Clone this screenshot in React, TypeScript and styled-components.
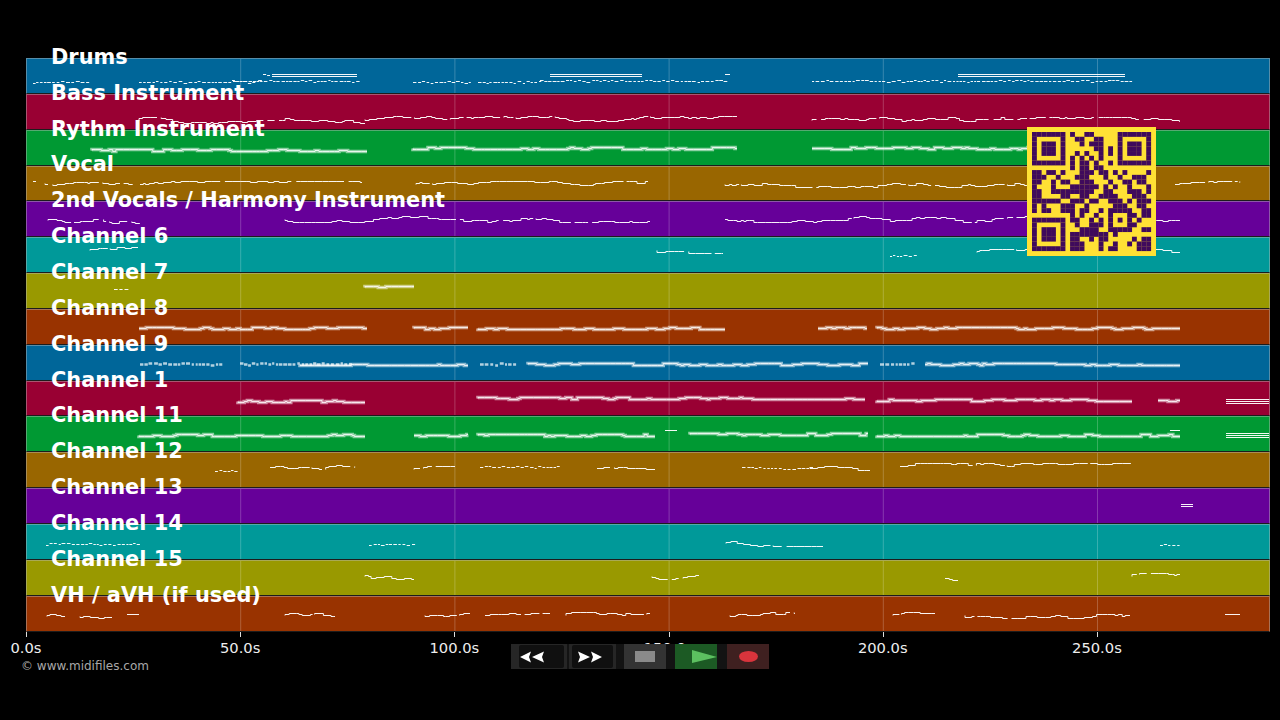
import * as React from "react";
import styled, { createGlobalStyle } from "styled-components";

const GlobalStyle = createGlobalStyle`
  html, body {
    margin: 0;
    background: #000;
  }
`;

const PX_PER_SECOND = 4.284;

const Page = styled.div`
  position: relative;
  box-sizing: border-box;
  width: 1280px;
  height: 720px;
  padding: 58px 10px 0 26px;
  overflow: hidden;
  background: #000;
  font-family: "DejaVu Sans", sans-serif;
`;

const Chart = styled.div`
  position: relative;
  display: flex;
  flex-direction: column;
  height: 573.6px;
`;

const Band = styled.div<{ $color: string }>`
  flex: 1;
  min-height: 0;
  box-sizing: border-box;
  background: ${(p) => p.$color};
  border: 1px solid rgba(190, 190, 190, 0.45);
  border-bottom: 1px solid #1c1c1c;
  overflow: hidden;
`;

const BandNotes = styled.svg`
  display: block;
  margin: -1px;
  width: 1244px;
  height: 36px;
`;

const LabelList = styled.div`
  position: absolute;
  top: -19px;
  left: 25px;
  height: 573.6px;
  display: flex;
  flex-direction: column;
`;

const TrackLabel = styled.div`
  flex: 1;
  display: flex;
  align-items: center;
  color: #fff;
  font-size: 20.9px;
  font-weight: 700;
  white-space: nowrap;
`;

const QrBox = styled.svg`
  position: absolute;
  left: 1001px;
  top: 69px;
  width: 129px;
  height: 129px;
  background: #ffe135;
`;

const Axis = styled.div`
  display: flex;
`;

const TickCell = styled.div`
  flex: 0 0 ${50 * PX_PER_SECOND}px;
  display: flex;
  flex-direction: column;
  align-items: flex-start;
`;

const TickMark = styled.div`
  width: 1px;
  height: 5px;
  background: #ddd;
`;

const TickText = styled.div`
  margin-top: 2px;
  transform: translateX(-50%);
  color: #eee;
  font-size: 14.7px;
  line-height: 18px;
`;

const Copyright = styled.div`
  margin: 1px 0 0 -5px;
  color: #a8a8a8;
  font-size: 12px;
  line-height: 16px;
`;

const ControlBar = styled.div`
  position: absolute;
  left: 511px;
  top: 644px;
  width: 258px;
  height: 25px;
  display: flex;
  background: #131313;
`;

const SkipButton = styled.div<{ $width: number; $lead: number }>`
  box-sizing: border-box;
  width: ${(p) => p.$width}px;
  padding-left: ${(p) => p.$lead}px;
  padding-right: 3px;
  background: #262626;
  display: flex;
  &:first-child {
    margin-right: 2px;
  }
`;

const SkipFace = styled.div<{ $inset: number }>`
  flex: 1;
  display: flex;
  align-items: center;
  padding-left: ${(p) => p.$inset}px;
  background: #101010;
  border-radius: 2px;
  margin: 1px 0;
`;

const ActionButton = styled.div<{ $bg: string; $gap: number }>`
  width: 42px;
  margin-left: ${(p) => p.$gap}px;
  display: flex;
  align-items: center;
  justify-content: center;
  background: ${(p) => p.$bg};
`;

const StopShape = styled.div`
  width: 20px;
  height: 11px;
  background: #8a8a8a;
`;

const PlayShape = styled.svg`
  margin-left: 8px;
  margin-right: -8px;
`;

const RecordShape = styled.div`
  width: 19px;
  height: 11px;
  border-radius: 50%;
  background: #d8343c;
`;

const bandColors = ["#006699", "#990033", "#009933", "#996600", "#660099", "#009999", "#999900", "#993300"];

const trackNames = [
  "Drums",
  "Bass Instrument",
  "Rythm Instrument",
  "Vocal",
  "2nd Vocals / Harmony Instrument",
  "Channel 6",
  "Channel 7",
  "Channel 8",
  "Channel 9",
  "Channel 1",
  "Channel 11",
  "Channel 12",
  "Channel 13",
  "Channel 14",
  "Channel 15",
  "VH / aVH (if used)",
];

type Kind = "dash" | "block" | "line" | "wave" | "thick";
// x0, x1 in page px, y in page px
type Run = [number, number, number, Kind];

const bandTops = [58, 94, 130, 166, 202, 238, 274, 309, 345, 381, 417, 453, 489, 524, 560, 596];

const tracks: Run[][] = [
  [
    [33, 88, 81, "dash"], [139, 262, 81, "dash"], [232, 357, 80, "dash"], [272, 357, 74, "line"], [272, 357, 76, "line"], [263, 270, 74, "dash"],
    [413, 470, 81, "dash"], [478, 540, 81, "dash"], [540, 725, 80, "dash"], [550, 642, 74, "line"], [550, 642, 76, "line"], [725, 730, 74, "line"],
    [812, 1130, 80, "dash"], [958, 1125, 74, "line"], [958, 1125, 76, "line"],
  ],
  [[139, 365, 120, "wave"], [365, 737, 119, "wave"], [812, 1180, 120, "wave"]],
  [[92, 367, 150, "thick"], [413, 737, 148, "thick"], [812, 1030, 148, "thick"]],
  [
    [33, 36, 181, "line"], [45, 135, 183, "wave"], [140, 362, 184, "wave"], [416, 648, 184, "wave"], [725, 1030, 184, "wave"], [1175, 1240, 184, "wave"],
  ],
  [[48, 140, 221, "wave"], [285, 650, 220, "wave"], [725, 1180, 220, "wave"]],
  [[90, 138, 251, "wave"], [657, 723, 251, "wave"], [890, 917, 256, "dash"], [977, 1180, 253, "wave"]],
  [[114, 126, 289, "dash"], [365, 414, 288, "thick"]],
  [[139, 367, 328, "thick"], [414, 468, 328, "thick"], [478, 725, 328, "thick"], [818, 867, 328, "thick"], [877, 1180, 328, "thick"]],
  [
    [140, 220, 363, "block"], [240, 350, 363, "block"], [300, 468, 364, "thick"], [480, 515, 363, "block"], [528, 868, 364, "thick"], [880, 912, 363, "block"], [925, 1180, 364, "thick"],
  ],
  [[238, 365, 401, "thick"], [478, 865, 398, "thick"], [877, 1132, 400, "thick"], [1158, 1180, 400, "thick"], [1226, 1270, 399, "line"], [1226, 1270, 401, "line"], [1226, 1270, 403, "line"]],
  [
    [139, 365, 436, "thick"], [414, 468, 436, "thick"], [478, 655, 436, "thick"], [665, 677, 431, "line"], [690, 868, 435, "thick"], [877, 1180, 436, "thick"], [1170, 1180, 431, "line"],
    [1226, 1270, 434, "line"], [1226, 1270, 436, "line"], [1226, 1270, 438, "line"],
  ],
  [
    [215, 237, 471, "dash"], [270, 355, 468, "wave"], [414, 455, 470, "wave"], [480, 560, 467, "dash"], [597, 655, 469, "wave"], [742, 810, 468, "dash"], [810, 870, 468, "wave"], [900, 1132, 467, "wave"],
  ],
  [[1181, 1193, 505, "line"], [1181, 1193, 507, "line"]],
  [[46, 140, 543, "dash"], [369, 414, 544, "dash"], [726, 823, 543, "wave"], [1160, 1180, 544, "dash"]],
  [[365, 414, 576, "wave"], [652, 699, 576, "wave"], [945, 958, 578, "wave"], [1132, 1180, 576, "wave"]],
  [
    [47, 65, 616, "wave"], [80, 112, 616, "wave"], [127, 139, 614, "line"], [285, 335, 615, "wave"], [425, 470, 615, "wave"], [485, 550, 615, "wave"],
    [566, 650, 615, "wave"], [730, 795, 615, "wave"], [893, 935, 615, "wave"], [965, 1130, 615, "wave"], [1225, 1240, 614, "line"],
  ],
];

// small deterministic generator so the notes look the same on every load
function makeRandom(seed: number) {
  let s = seed;
  return () => {
    s = (s * 16807) % 2147483647;
    return s / 2147483647;
  };
}

function runPath(run: Run, top: number, seed: number) {
  const [x0, x1, y, kind] = run;
  const rnd = makeRandom(seed * 7919 + 13);
  const localY = y - top + 0.5;
  const left = x0 - 26;
  const right = x1 - 26;
  if (kind === "line") return `M${left} ${localY}H${right}`;
  let d = "";
  let x = left;
  if (kind === "dash" || kind === "block") {
    while (x < right) {
      const w = 2 + rnd() * 2;
      const dy = Math.round(rnd() * 1.6);
      d += `M${x.toFixed(1)} ${localY + dy}h${w.toFixed(1)}`;
      x += w + 0.5 + rnd() * 1.5;
    }
    return d;
  }
  const limit = kind === "wave" ? 3 : 1;
  let offset = 0;
  d = `M${x} ${localY}`;
  while (x < right) {
    const w = Math.min(2 + rnd() * 7, right - x);
    offset += Math.round((rnd() - 0.5) * 3.4);
    offset = Math.max(-limit, Math.min(limit, offset));
    d += `L${x.toFixed(1)} ${localY + offset}h${w.toFixed(1)}`;
    x += w;
    if (kind === "wave" && rnd() < 0.1) {
      x += 2 + rnd() * 3;
      d += `M${x.toFixed(1)} ${localY + offset}`;
    }
  }
  return d;
}

const qrRows = [
  "11111 11010 01100 00011 11111",
  "10000 01001 10011 00010 00001",
  "10111 01000 10111 00010 11101",
  "10111 01000 00011 01010 11101",
  "10111 01001 01001 01010 11101",
  "10000 01010 10101 00010 00001",
  "11111 11010 11010 01011 11111",
  "00000 00010 11011 00000 00000",
  "11011 01000 11101 10101 00001",
  "11100 10001 11000 10010 01110",
  "11001 01100 11100 01001 10110",
  "10001 00011 11110 10100 10001",
  "11001 11111 11100 11000 11101",
  "11000 01100 11001 11100 01110",
  "11111 10011 10110 01110 10111",
  "10100 01110 01000 00111 00110",
  "10110 01110 11001 01111 10011",
  "00000 00010 10010 01000 11011",
  "11111 11011 00101 01010 10100",
  "10000 01001 00111 01000 11000",
  "10111 01000 11110 01111 10011",
  "10111 01011 11111 10100 00000",
  "10111 01011 00101 10000 01011",
  "10000 01011 10001 00100 10111",
  "11111 11011 10001 01100 00111",
].map((row) => row.replace(/ /g, ""));

function QrCode() {
  return (
    <QrBox viewBox="-1.05 -1.05 27.1 27.1">
      {qrRows.map((row, r) =>
        row.split("").map((cell, c) =>
          cell === "1" ? <rect key={`${r}-${c}`} x={c} y={r} width={1.02} height={1.02} fill="#3f0a5c" /> : null,
        ),
      )}
    </QrBox>
  );
}

function SkipArrows({ back }: { back: boolean }) {
  return (
    <svg width="25" height="14" viewBox="0 0 25 14">
      <g fill="#fff" transform={back ? undefined : "translate(25 0) scale(-1 1)"}>
        <polygon points="0,7 11,1.5 9,7 11,12.5" />
        <polygon points="12,7 24,1.5 22,7 24,12.5" />
      </g>
    </svg>
  );
}

function NoteRun({ run, top, seed }: { run: Run; top: number; seed: number }) {
  const d = runPath(run, top, seed);
  const kind = run[3];
  if (kind === "thick") {
    return (
      <>
        <path d={d} fill="none" stroke="#fff" strokeOpacity={0.55} strokeWidth={3.6} />
        <path d={d} fill="none" stroke="#fff" strokeOpacity={0.8} strokeWidth={1} />
      </>
    );
  }
  if (kind === "block") {
    return <path d={d} fill="none" stroke="#fff" strokeOpacity={0.7} strokeWidth={2.4} />;
  }
  return <path d={d} fill="none" stroke="#fff" strokeOpacity={0.95} strokeWidth={1} />;
}

function App() {
  return (
    <Page>
      <GlobalStyle />
      <Chart>
        {tracks.map((runs, i) => (
          <Band key={i} $color={bandColors[i % 8]}>
            <BandNotes>
              {[1, 2, 3, 4, 5].map((n) => (
                <line
                  key={n}
                  x1={n * 50 * PX_PER_SECOND + 0.5}
                  x2={n * 50 * PX_PER_SECOND + 0.5}
                  y1={0}
                  y2={36}
                  stroke="rgba(255,255,255,0.22)"
                />
              ))}
              {runs.map((run, j) => (
                <NoteRun key={j} run={run} top={bandTops[i]} seed={i * 31 + j + 5} />
              ))}
            </BandNotes>
          </Band>
        ))}
        <LabelList>
          {trackNames.map((name) => (
            <TrackLabel key={name}>{name}</TrackLabel>
          ))}
        </LabelList>
        <QrCode />
      </Chart>
      <Axis>
        {[0, 50, 100, 150, 200, 250].map((t) => (
          <TickCell key={t}>
            <TickMark />
            <TickText>{t.toFixed(1)}s</TickText>
          </TickCell>
        ))}
      </Axis>
      <Copyright>© www.midifiles.com</Copyright>
      <ControlBar>
        <SkipButton $width={56} $lead={8}>
          <SkipFace $inset={1}>
            <SkipArrows back />
          </SkipFace>
        </SkipButton>
        <SkipButton $width={47} $lead={3}>
          <SkipFace $inset={5}>
            <SkipArrows back={false} />
          </SkipFace>
        </SkipButton>
        <ActionButton $bg="#333" $gap={8}>
          <StopShape />
        </ActionButton>
        <ActionButton $bg="#1c5a24" $gap={9}>
          <PlayShape width="27" height="15" viewBox="0 0 27 15">
            <polygon points="1,1 26,8 1,14" fill="#5cc060" />
          </PlayShape>
        </ActionButton>
        <ActionButton $bg="#3f2020" $gap={10}>
          <RecordShape />
        </ActionButton>
      </ControlBar>
    </Page>
  );
}

export default App;
